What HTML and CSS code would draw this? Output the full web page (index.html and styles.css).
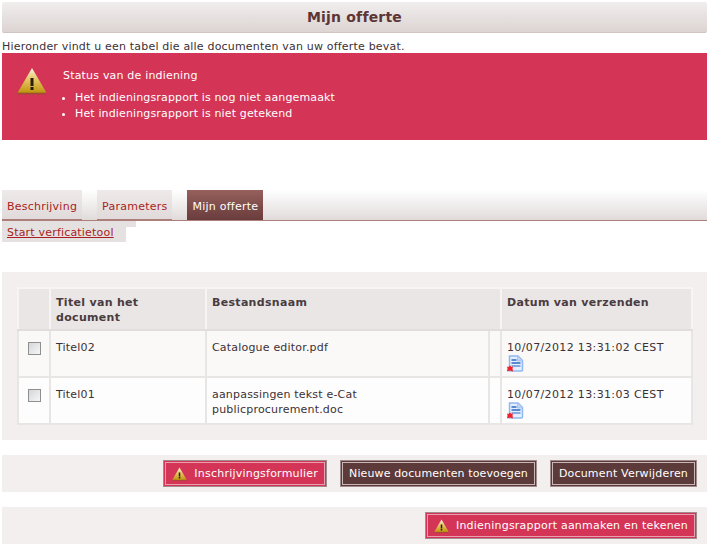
FILE: index.html
```html
<!doctype html>
<html>
    <head>
        <title>Mijn offerte</title>
        <meta charset="utf-8">
        <link rel="stylesheet" href="styles.css">
    </head>
    <body>
        <svg class="defs" width="0" height="0">
            <defs>
                <linearGradient id="warn_fill" x1="0" y1="0" x2="0" y2="1">
                    <stop offset="0" stop-color="#fdf6dc"/>
                    <stop offset=".45" stop-color="#e6c564"/>
                    <stop offset="1" stop-color="#c0930f"/>
                </linearGradient>
                <symbol id="warn" viewBox="0 0 30 28">
                    <path d="M15 1 L29 25 Q29.500 26 28 26 L2 26 Q.5 26 1 25 Z" fill="url(#warn_fill)"/>
                    <rect x="1" y="25.500" width="28" height="2" fill="#7a5a1a" opacity=".55"/>
                    <rect x="13.500" y="11" width="3" height="8" fill="#2a1c05"/>
                    <rect x="13.500" y="20" width="3" height="3" fill="#2a1c05"/>
                </symbol>
                <symbol id="doc" viewBox="0 0 17 17">
                    <path d="M2.500 1 H11 L15.500 5.500 V15 Q15.500 16 14.500 16 H2.500 Z" fill="#e4eefc" stroke="#90b8f0" stroke-width="1.500"/>
                    <path d="M10.500 1 V6 H15.500" fill="#bcd4f7" stroke="#a4c4f3"/>
                    <rect x="4.500" y="4" width="5" height="2" fill="#5b8ad0"/>
                    <rect x="4.500" y="7" width="9" height="2" fill="#5b8ad0"/>
                    <rect x="4.500" y="10" width="9" height="2" fill="#86abe2"/>
                    <path d="M3 10.500 L4.500 12 L6 11.500 L5.500 13.500 L6 16.500 L3 15.500 L0 16.500 L.5 13.500 L0 11.500 L1.500 12 Z" fill="#f0202c"/>
                </symbol>
            </defs>
        </svg>

        <h1 class="page_title">Mijn offerte</h1>
        <p class="intro">Hieronder vindt u een tabel die alle documenten van uw offerte bevat.</p>

        <div class="alert">
            <svg class="alert_icon"><use href="#warn"/></svg>
            <div class="alert_body">
                <div class="alert_title">Status van de indiening</div>
                <ul>
                    <li>Het indieningsrapport is nog niet aangemaakt</li>
                    <li>Het indieningsrapport is niet getekend</li>
                </ul>
            </div>
        </div>

        <div class="tabs">
            <a class="tab" href="#">Beschrijving</a>
            <a class="tab" href="#">Parameters</a>
            <a class="tab active" href="#">Mijn offerte</a>
        </div>
        <div class="subtabs">
            <div class="subtab_top"></div>
            <a class="subtab" href="#">Start verficatietool</a>
        </div>

        <div class="panel">
            <table class="docs">
                <colgroup>
                    <col class="col_check">
                    <col class="col_title">
                    <col class="col_file">
                    <col class="col_gap">
                    <col class="col_date">
                </colgroup>
                <thead>
                    <tr>
                        <th></th>
                        <th>Titel van het document</th>
                        <th colspan="2">Bestandsnaam</th>
                        <th>Datum van verzenden</th>
                    </tr>
                </thead>
                <tbody>
                    <tr class="even">
                        <td><span class="check"></span></td>
                        <td>Titel02</td>
                        <td>Catalogue editor.pdf</td>
                        <td></td>
                        <td class="date">10/07/2012 13:31:02 CEST<svg class="doc_icon"><use href="#doc"/></svg></td>
                    </tr>
                    <tr>
                        <td><span class="check"></span></td>
                        <td>Titel01</td>
                        <td>aanpassingen tekst e-Cat publicprocurement.doc</td>
                        <td></td>
                        <td class="date">10/07/2012 13:31:03 CEST<svg class="doc_icon"><use href="#doc"/></svg></td>
                    </tr>
                </tbody>
            </table>
        </div>

        <div class="actions">
            <a class="btn btn_warn" href="#"><svg class="btn_icon"><use href="#warn"/></svg>Inschrijvingsformulier</a>
            <a class="btn btn_tight" href="#">Nieuwe documenten toevoegen</a>
            <a class="btn" href="#">Document Verwijderen</a>
        </div>
        <div class="actions">
            <a class="btn btn_warn" href="#"><svg class="btn_icon"><use href="#warn"/></svg>Indieningsrapport aanmaken en tekenen</a>
        </div>
    </body>
</html>
```

FILE: styles.css
```css
body {
    margin: 2px;
    background: white;
    color: #3c3136;
    font: 11px/14px 'DejaVu Sans', Verdana, sans-serif;
    letter-spacing: .19px;
}

a {
    text-decoration: none;
}

.defs {
    display: block;
    height: 0;
}

.page_title {
    height: 30px;
    margin: 0;
    border-bottom: 1px solid #cfc4c2;
    border-radius: 2px;
    background: linear-gradient(#f0eeed, #dcd4d3);
    color: #5e3535;
    font-size: 14px;
    line-height: 31px;
    text-align: center;
}

.intro {
    height: 20px;
    margin: 0;
    line-height: 28px;
}

.alert {
    display: flex;
    height: 87px;
    box-sizing: border-box;
    padding: 14px 0 0 15px;
    background: #d43557;
    color: white;
}

.alert_icon {
    width: 30px;
    height: 28px;
    flex: none;
}

.alert_body {
    margin-left: 16px;
}

.alert_title {
    line-height: 17px;
}

.alert ul {
    margin: 6px 0 0 -4px;
    padding: 0 0 0 16px;
    line-height: 16px;
    letter-spacing: .14px;
}

.tabs {
    display: flex;
    gap: 15px;
    height: 30px;
    margin-top: 50px;
    border-bottom: 1px solid #ad7f7b;
    background: linear-gradient(white, #e0dbda);
}

.tab {
    height: 29px;
    padding: 0 5px;
    border-bottom: 1px solid #ad7f7b;
    background: linear-gradient(#eeeae9, #e0dbda);
    color: #a81e22;
    letter-spacing: .24px;
    line-height: 33px;
}

.tab.active {
    height: 30px;
    border-bottom: 0;
    background: linear-gradient(#96605c, #693c3c);
    color: white;
}

.subtabs {
    position: relative;
    height: 21px;
}

.subtab_top {
    width: 134px;
    height: 6px;
    background: #e5e1e0;
}

.subtab {
    position: absolute;
    top: 0;
    left: 0;
    width: 124px;
    height: 21px;
    box-sizing: border-box;
    padding-left: 5px;
    background: #e5e1e0;
    color: #a81e22;
    line-height: 23px;
    text-decoration: underline;
}

.panel {
    height: 168px;
    box-sizing: border-box;
    margin-top: 30px;
    padding: 15px 16px 0 15px;
    background: #f2efee;
}

.docs {
    width: 674px;
    border-collapse: collapse;
    border: 2px solid #e4e1e0;
    table-layout: fixed;
    background: #fdfdfd;
}

.col_check {
    width: 32px;
}

.col_title {
    width: 156px;
}

.col_file {
    width: 283px;
}

.col_gap {
    width: 12px;
}

.col_date {
    width: 191px;
}

.docs th, .docs td {
    padding: 6px 5px;
    border: 2px solid #e8e6e5;
    text-align: left;
    vertical-align: top;
}

.docs th {
    padding-bottom: 4px;
    background: #e9e6e5;
    border-color: #f6f5f4;
    border-bottom-color: #e0dddc;
    color: #4a3b40;
    letter-spacing: .31px;
    line-height: 15px;
}

.docs td {
    height: 36px;
    padding-top: 9px;
    padding-bottom: 0;
    line-height: 15px;
}

.docs td.date {
    letter-spacing: .36px;
}

.docs .even td {
    background: #faf9f8;
}

.check {
    display: block;
    width: 11px;
    height: 11px;
    margin: 2px 0 0 4px;
    border: 1px solid #8f8f8f;
    background: linear-gradient(135deg, #d4d6da, #f6f6f6);
}

.doc_icon {
    display: block;
    width: 17px;
    height: 17px;
}

.actions {
    display: flex;
    justify-content: flex-end;
    gap: 15px;
    height: 37px;
    box-sizing: border-box;
    margin-top: 15px;
    padding: 6px 11px 0 0;
    background: #f2efee;
}

.btn {
    display: flex;
    align-items: center;
    height: 25px;
    box-sizing: border-box;
    padding: 0 7px;
    border: 1px solid #5d3a3a;
    outline: 1px solid #a08c8c;
    box-shadow: inset 0 0 0 1px #c9b7b7;
    background: #5d3a3a;
    color: white;
    white-space: nowrap;
}

.btn_tight {
    letter-spacing: .12px;
}

.btn_warn {
    border-color: #d43557;
    box-shadow: inset 0 0 0 1px #e6a0af;
    background: #d43557;
    letter-spacing: .22px;
}

.btn_icon {
    width: 15px;
    height: 14px;
    margin-right: 7px;
}
```
